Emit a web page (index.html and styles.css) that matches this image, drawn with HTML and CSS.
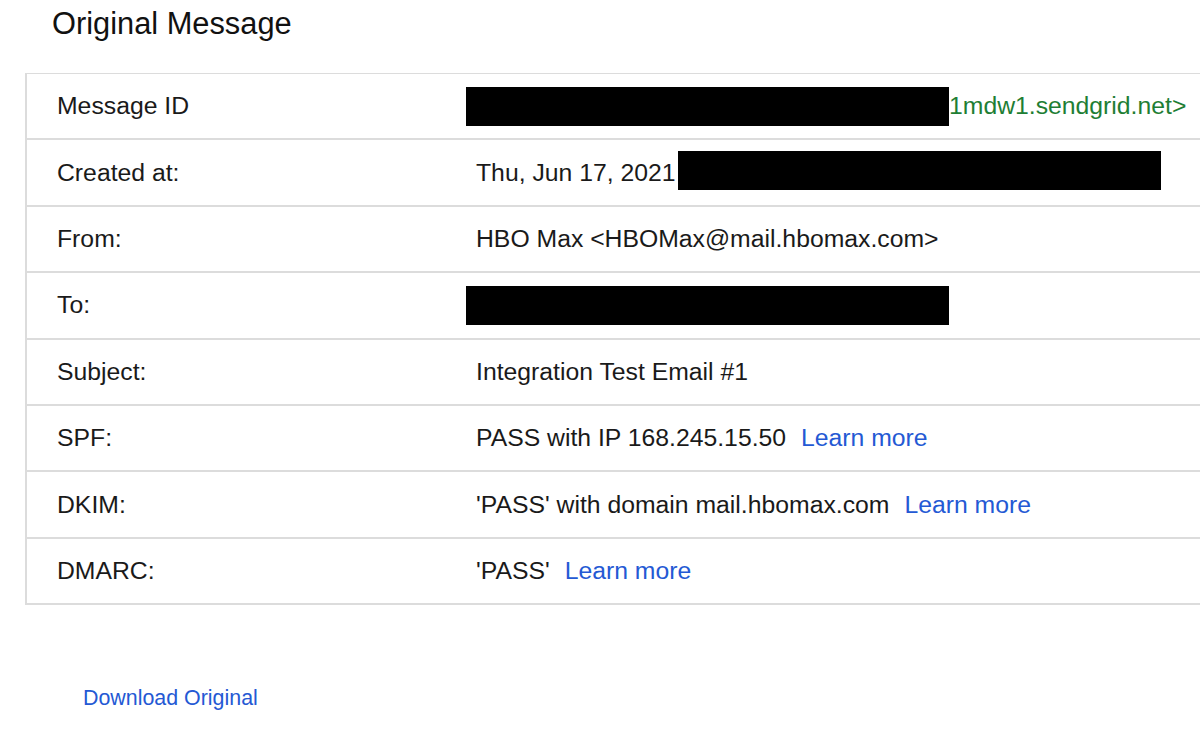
FILE: index.html
```html
<!DOCTYPE html>
<html>
<head>
<meta charset="utf-8">
<link rel="stylesheet" href="styles.css">
</head>
<body>
<h1 class="title">Original Message</h1>
<div class="table">
  <div class="row">
    <div class="label">Message ID</div>
    <div class="value"><span class="redact"></span><span class="green">1mdw1.sendgrid.net&gt;</span></div>
  </div>
  <div class="row">
    <div class="label">Created at:</div>
    <div class="value"><span class="text">Thu, Jun 17, 2021</span><span class="redact redact-up"></span></div>
  </div>
  <div class="row">
    <div class="label">From:</div>
    <div class="value"><span class="text">HBO Max &lt;HBOMax@mail.hbomax.com&gt;</span></div>
  </div>
  <div class="row">
    <div class="label">To:</div>
    <div class="value"><span class="redact"></span></div>
  </div>
  <div class="row">
    <div class="label">Subject:</div>
    <div class="value"><span class="text">Integration Test Email #1</span></div>
  </div>
  <div class="row">
    <div class="label">SPF:</div>
    <div class="value"><span class="text">PASS with IP 168.245.15.50</span><a class="link" href="#">Learn more</a></div>
  </div>
  <div class="row">
    <div class="label">DKIM:</div>
    <div class="value"><span class="text">'PASS' with domain mail.hbomax.com</span><a class="link" href="#">Learn more</a></div>
  </div>
  <div class="row">
    <div class="label">DMARC:</div>
    <div class="value"><span class="text">'PASS'</span><a class="link" href="#">Learn more</a></div>
  </div>
</div>
<div class="download"><a class="link-dl" href="#">Download Original</a></div>
</body>
</html>
```
FILE: styles.css
```css
html, body {
  margin: 0;
  padding: 0;
  background: #fff;
  overflow: hidden;
}
body {
  font-family: "Liberation Sans", Arial, sans-serif;
  color: #222;
  width: 1200px;
  height: 731px;
}
.title {
  margin: 0;
  padding: 6px 0 0 52px;
  font-size: 30.8px;
  font-weight: normal;
  line-height: 36px;
  height: 67px;
  color: #111;
}
.table {
  margin-left: 25px;
  width: 1220px;
  border-top: 1.5px solid #dcdcdc;
  border-left: 2px solid #dcdcdc;
}
.row {
  display: flex;
  height: 64.4px;
  border-bottom: 2px solid #dcdcdc;
  font-size: 24.75px;
}
.label {
  width: 409px;
  padding-left: 30px;
  display: flex;
  align-items: center;
  color: #1a1a1a;
}
.value {
  display: flex;
  align-items: center;
  color: #1a1a1a;
}
.text {
  padding-left: 10px;
  white-space: nowrap;
}
.redact {
  display: inline-block;
  width: 483px;
  height: 39px;
  background: #000;
}
.redact-up {
  margin-top: -5px;
  margin-left: 2px;
}
.green {
  color: #1e7e34;
  white-space: nowrap;
}
.link {
  color: #2459d4;
  text-decoration: none;
  margin-left: 15px;
  white-space: nowrap;
}
.download {
  padding: 81px 0 0 83px;
  font-size: 21.4px;
}
.link-dl {
  color: #2459d4;
  text-decoration: none;
}
```
